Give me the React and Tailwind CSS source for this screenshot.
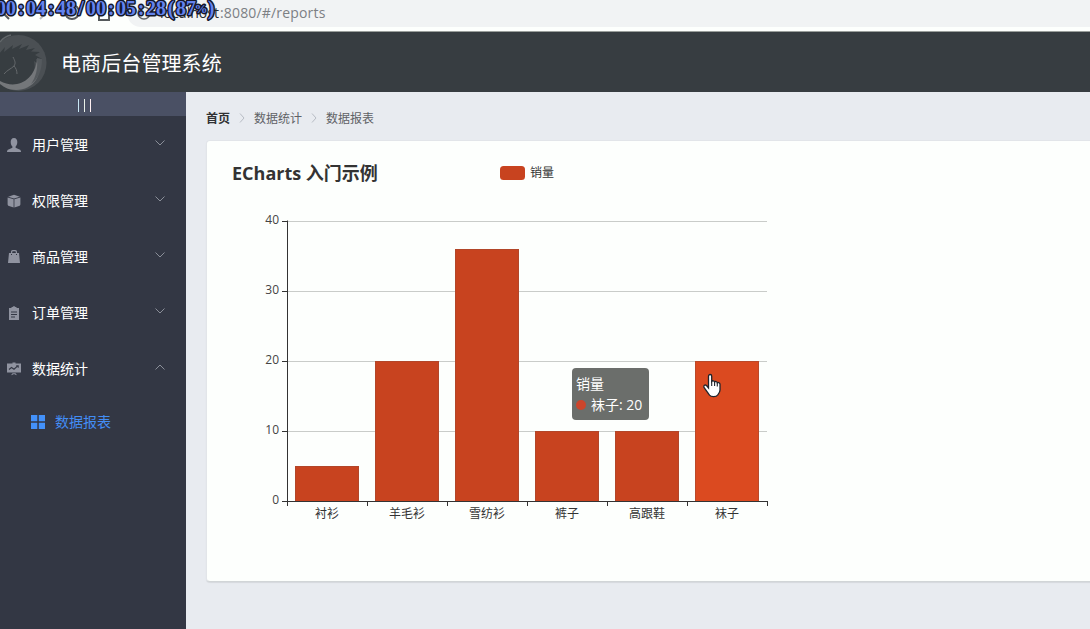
import React from 'react';

const timerStart = '00:04:48/00:05:28(87';
const timerX = timerStart.split('').map((_, i) => 1 + i * 10).join(' ');

function BrowserBar() {
  return (
    <div className="relative h-8 shrink-0 overflow-hidden border-b border-[#9a9f9c] bg-[#fdfffd]">
      <div className="ml-[127px] flex h-[27px] items-center rounded-bl-[14px] bg-[#f1f3f4] pb-[2px] pl-[33px] font-['Open_Sans','Noto_Sans',sans-serif] text-[14px] text-[#7c8084]">
        <span className="w-[60px] whitespace-nowrap text-[#26292c] tracking-[0.05px]">localhost</span>
        <span className="tracking-[0.17px]">:8080/#/reports</span>
      </div>
      <svg className="absolute left-0 top-0" width="230" height="31" fill="none">
        <path d="M2 12l7 7" stroke="#55595c" strokeWidth="2" />
        <path d="M47 12l-7 7" stroke="#bfc2c4" strokeWidth="2" />
        <circle cx="72" cy="12" r="7" stroke="#55595c" strokeWidth="2" />
        <path d="M99 8v12h10V8" stroke="#55595c" strokeWidth="2" />
        <circle cx="144" cy="13" r="6" stroke="#606468" strokeWidth="1.5" />
        <text x={timerX} y="15" textAnchor="middle" className="font-['Liberation_Serif',serif] text-[20px] font-bold" fill="#6283ee" stroke="#15182b" strokeWidth="3" paintOrder="stroke" strokeLinejoin="round">
          {timerStart}
          <tspan x="201" className="text-[13px]" dy="-2">%</tspan>
          <tspan x="211" dy="2">)</tspan>
        </text>
      </svg>
    </div>
  );
}

function Logo() {
  return (
    <svg width="47" height="60" viewBox="0 0 47 60" fill="none" className="shrink-0">
      <circle cx="18.500" cy="31" r="28" fill="#4b5054" />
      <path d="M-1 22L5 15l-1 5 9-7-1 4 10-5-3 5 10-4-3 5 9-2-4 3.500 9 .5-5 3 7 4-6 0 2 5-4-3c3 12-4 24-18 26C9 56 1 53-2 46z" fill="#373d41" />
      <path d="M0 49c16 9 35 0 37-22 7 15-3 31-21 31-7 0-12-3-16-6z" fill="#74777a" />
      <path d="M37 26l5 1c0 12-4 20-11 25 5-7 7-16 6-26z" fill="#555a5e" />
      <path d="M0 10C3 6 7 4 11 3" stroke="#62676a" strokeWidth="1.300" />
      <path d="M13 25c2 4 3 6 1 9-3 3-7 4-10 8M14 34c2 2 3 5 3 8" stroke="#65696c" strokeWidth="1" />
    </svg>
  );
}

const icons = {
  user: <path d="M7 0C4.7 0 3.7 1.7 3.7 4c0 2 .8 3.6 1.7 4.5v1.2L1.5 11.4C.5 11.8 0 12.5 0 14h14c0-1.500-.5-2.200-1.500-2.600L8.600 9.700V8.500c.9-.9 1.700-2.500 1.700-4.500C10.300 1.700 9.300 0 7 0z" />,
  box: (
    <g>
      <path d="M1.200 2.700L7 .7l5.800 2L7 4.400z" />
      <path d="M.6 3.600L6.600 5.300V13.500L2 12C1 11.600.6 11 .6 10zM13.400 3.600L7.400 5.300v8.200L12 12c1-.4 1.400-1 1.400-2z" />
    </g>
  ),
  bag: <path fillRule="evenodd" d="M4 3V1.800C4 .8 4.700 0 5.700 0h2.600C9.300 0 10 .8 10 1.800V3h2l1 10H1L2 3zm1.200 0h3.600V2c0-.5-.3-.8-.8-.8H6c-.5 0-.8.3-.8.800zM4 4v1h1V4zm5 0v1h1V4z" />,
  order: <path fillRule="evenodd" d="M2 2h2.500V1h1.200C5.700 0 8.300 0 8.300 1h1.200v1H12v12H2zm2 3.500v1.100h6V5.500zm0 2.500v1.100h6V8zm0 2.500v1.100h4v-1.100z" />,
  stats: (
    <g>
      <path d="M0 1.500h5.500V.5h3v1H14v9H0zM4 13.300l1.500-2h3l1.500 2-1.500-.5L7 12l-1.500.8z" />
      <path d="M2 7.500l2.500-2L7 7.200l4-3.500M9.200 3.700h2v2" fill="none" stroke="#333744" strokeWidth="1.100" />
    </g>
  ),
};

const menu = [
  ['user', '用户管理'],
  ['box', '权限管理'],
  ['bag', '商品管理'],
  ['order', '订单管理'],
  ['stats', '数据统计'],
];

function Sidebar() {
  return (
    <aside className="w-[186px] shrink-0 bg-[#333744] text-[14px]">
      <div className="flex h-6 items-center justify-center gap-[5px] bg-[#4a5064] pr-[17px] pt-[2px]">
        <i className="h-[13px] w-px bg-[#c8e6f4]" />
        <i className="h-[13px] w-px bg-[#e9f0e8]" />
        <i className="h-[13px] w-px bg-[#fff0f2]" />
      </div>
      {menu.map(([icon, label]) => (
        <div key={label} className="flex h-14 items-center pl-[7px] pr-5 text-white">
          <svg width="14" height="14" viewBox="0 0 14 14" fill="#9093a0" className="mt-0.5">{icons[icon]}</svg>
          <span className="ml-[11px] grow">{label}</span>
          <svg width="12" height="8" viewBox="0 0 12 8" fill="none" stroke="#8b8f99" className="-mt-0.5">
            <path d={icon === 'stats' ? 'M1.500 6.500L6 2l4.500 4.500' : 'M1.500 1.500L6 6l4.500-4.500'} />
          </svg>
        </div>
      ))}
      <div className="flex h-[50px] items-center pl-[31px]">
        <svg width="14" height="14" viewBox="0 0 14 14" fill="#4391fa" className="mt-0.5">
          <path d="M0 0h6.300v6.200H0zM7.800 0H14v6.200H7.800zM0 7.800h6.300V14H0zM7.800 7.800H14V14H7.800z" />
        </svg>
        <span className="ml-[10px] text-[#438df5]">数据报表</span>
      </div>
    </aside>
  );
}

function Separator() {
  return (
    <svg width="6" height="10" viewBox="0 0 6 10" fill="none" stroke="#b8bcc4" className="mx-[9px]">
      <path d="M1 .5L5 5 1 9.500" />
    </svg>
  );
}

const bars = [
  ['衬衫', 5],
  ['羊毛衫', 20],
  ['雪纺衫', 36],
  ['裤子', 10],
  ['高跟鞋', 10],
  ['袜子', 20],
];

function Chart() {
  return (
    <svg width="600" height="400" className="block overflow-visible font-['Open_Sans','Noto_Sans_CJK_SC',sans-serif]">
      <text x="5" y="13" fill="#333" className="font-['Open_Sans','Noto_Sans_CJK_SC',sans-serif] text-[18px] font-bold">ECharts 入门示例</text>
      <rect x="273" y="-1" width="25" height="14" rx="3.500" fill="#c8431f" />
      <text x="303" y="9.500" fill="#333" className="text-[12px]">销量</text>
      {[0, 10, 20, 30, 40].map((v) => (
        <g key={v}>
          <path d={`M60 ${334.5 - v * 7}H540`} stroke="#c9ccc9" />
          <path d={`M55 ${334.5 - v * 7}H60`} stroke="#333" />
          <text x="52" y={337 - v * 7} textAnchor="end" fill="#444" className="text-[12px]">{v}</text>
        </g>
      ))}
      {bars.map(([name, v], i) => (
        <g key={name}>
          <rect x={68 + i * 80} y={334 - v * 7} width="64" height={v * 7} fill={i === 5 ? '#db4a20' : '#c8431f'} />
          <path d={`M${68.5 + i * 80} 334V${334.5 - v * 7}h63V334`} fill="none" stroke="#a34a30" strokeOpacity=".6" />
          <text x={100 + i * 80} y="351" textAnchor="middle" fill="#333" className="text-[12px]">{name}</text>
        </g>
      ))}
      <path d="M60.500 53.500V334.500H540.500" fill="none" stroke="#333" />
      {[0, 1, 2, 3, 4, 5, 6].map((i) => (
        <path key={i} d={`M${60.5 + i * 80} 334v5`} stroke="#333" />
      ))}
    </svg>
  );
}

function Tooltip() {
  return (
    <div className="absolute left-[365px] top-[227px] h-[52px] w-[77px] whitespace-nowrap rounded bg-[#6b6e6b] py-[5px] pl-1 font-['Open_Sans','Noto_Sans_CJK_SC',sans-serif] text-[14px] leading-[21px] text-white">
      <div>销量</div>
      <div className="flex items-center">
        <i className="mr-[5px] h-[10px] w-[10px] rounded-full bg-[#cc452b]" />
        袜子: 20
      </div>
    </div>
  );
}

function HandCursor() {
  return (
    <svg width="20" height="26" viewBox="0 0 20 26" className="absolute left-[495px] top-[232px]">
      <path d="M6.500 15V3.200c0-2.300 3.200-2.300 3.200 0V8.500c.8-1.200 2.600-.8 2.900.5 1-1 2.500-.5 2.700.8 1.200-.7 2.600 0 2.700 1.500V17c0 2.500-1.500 4-2.300 5-1.500 2.200-6.700 2.200-8.200.2L2 14.500c-.8-2 1-3.200 2.500-2z" fill="#fff" stroke="#20242c" strokeWidth="1.300" />
      <path d="M9.700 8v5M12.600 9v4M15.300 10v3.500" stroke="#20242c" strokeWidth="1.100" />
    </svg>
  );
}

export default function App() {
  return (
    <div className="flex h-[629px] w-[1090px] flex-col overflow-hidden font-['Noto_Sans_CJK_SC',sans-serif]">
      <BrowserBar />
      <header className="flex h-[60px] shrink-0 items-center bg-[#373d41]">
        <Logo />
        <h1 className="ml-[14px] mt-[2px] text-[20px] tracking-[0.1px] text-white">电商后台管理系统</h1>
      </header>
      <div className="flex min-h-0 grow">
        <Sidebar />
        <main className="min-w-0 grow bg-[#e8ebf0] pl-5 pt-5">
          <nav className="flex h-3 items-center whitespace-nowrap text-[12px] text-[#606266]">
            <span className="font-bold text-[#303133]">首页</span>
            <Separator />
            <span>数据统计</span>
            <Separator />
            <span>数据报表</span>
          </nav>
          <section className="relative mt-4 h-[442px] w-[960px] rounded border border-[#e2e5e9] border-b-[#d1d5d7] bg-[#fdfffd] p-5 pt-[26px] shadow-[0_1px_1px_rgba(0,0,0,0.08)]">
            <Chart />
            <Tooltip />
            <HandCursor />
          </section>
        </main>
      </div>
    </div>
  );
}
